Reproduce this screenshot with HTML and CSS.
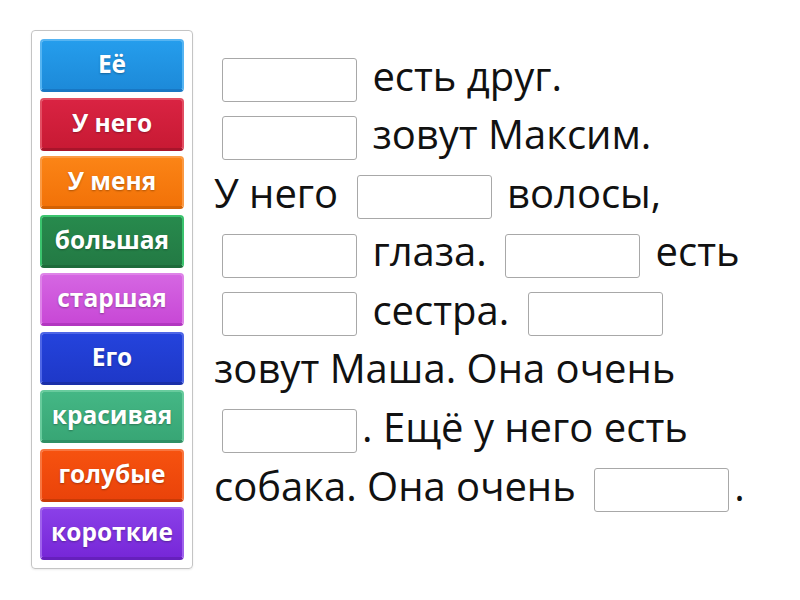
FILE: index.html
```
<!DOCTYPE html>
<html lang="ru">
<head>
<meta charset="utf-8">
<title>Заполните пропуски</title>
<link rel="stylesheet" href="styles.css">
</head>
<body>
<div class="page">
  <div class="bank">
    <div class="tile t-blue">Её</div>
    <div class="tile t-red">У него</div>
    <div class="tile t-orange">У меня</div>
    <div class="tile t-green">большая</div>
    <div class="tile t-orchid">старшая</div>
    <div class="tile t-navy">Его</div>
    <div class="tile t-mint">красивая</div>
    <div class="tile t-flame">голубые</div>
    <div class="tile t-purple">короткие</div>
  </div>
  <div class="text"><span class="gap"></span> есть друг.<br><span class="gap"></span> зовут Максим.<br>У него <span class="gap"></span> волосы, <span class="gap"></span> глаза. <span class="gap"></span> есть <span class="gap"></span> сестра. <span class="gap"></span> зовут Маша. Она очень <span class="gap"></span>. Ещё у него есть собака. Она очень <span class="gap"></span>.</div>
</div>
</body>
</html>
```
FILE: styles.css
```
html, body {
  margin: 0;
  padding: 0;
  background: #ffffff;
}
body {
  font-family: "Open Sans", "Noto Sans", sans-serif;
  width: 800px;
  height: 600px;
  overflow: hidden;
}
.page {
  display: flex;
  align-items: flex-start;
  padding: 30px 0 0 31px;
  gap: 21px;
}
.bank {
  width: 144px;
  padding: 8px;
  border: 1px solid #c4c4c4;
  border-radius: 4px;
  display: flex;
  flex-direction: column;
  gap: 5.5px;
  box-shadow: 0 1px 2px rgba(0,0,0,0.08);
}
.tile {
  height: 53px;
  box-sizing: border-box;
  border-radius: 4px;
  display: flex;
  align-items: center;
  justify-content: center;
  color: #ffffff;
  font-weight: 700;
  font-size: 24.5px;
  text-shadow: 0 1px 2px rgba(0,0,0,0.3);
  border: 2px solid rgba(255,255,255,0.22);
  border-bottom: 3px solid rgba(0,0,0,0.18);
  background-clip: padding-box;
  padding-bottom: 3px;
}
.t-blue { background-color: #2196e6; background-image: linear-gradient(#259dec, #1d8ad9); border-color: #55b4f2 #55b4f2 #1877c4; }
.t-red { background-color: #d11f3a; background-image: linear-gradient(#d92342, #c81a34); border-color: #e24e63 #e24e63 #a8152b; }
.t-orange { background-color: #f67a10; background-image: linear-gradient(#fb8416, #f27208); border-color: #fb9a44 #fb9a44 #d36204; }
.t-green { background-color: #26844a; background-image: linear-gradient(#278a4d, #237a44); border-color: #3bc46e #3bc46e #1d6b3a; }
.t-orchid { background-color: #cf58dc; background-image: linear-gradient(#d566e2, #c848d6); border-color: #de84e8 #de84e8 #b236c0; }
.t-navy { background-color: #213fd6; background-image: linear-gradient(#2443dc, #1e38c8); border-color: #4e66e6 #4e66e6 #1a2fa8; }
.t-mint { background-color: #3faf7f; background-image: linear-gradient(#44b785, #38a675); border-color: #68cb9d #68cb9d #2f8f64; }
.t-flame { background-color: #f24a0c; background-image: linear-gradient(#f6520f, #ea430a); border-color: #f8753f #f8753f #c93a06; }
.t-purple { background-color: #8132e2; background-image: linear-gradient(#8a3fe8, #7727d8); border-color: #9f62ec #9f62ec #6620bc; }
.text {
  width: 556px;
  font-size: 40px;
  line-height: 58.6px;
  color: #111111;
  margin-top: 16.5px;
}
.gap {
  display: inline-block;
  width: 135px;
  height: 44px;
  box-sizing: border-box;
  border: 1px solid #a8a8a8;
  border-radius: 3px;
  background: #ffffff;
  vertical-align: middle;
  margin: 0 5px 0 8px;
}
```
